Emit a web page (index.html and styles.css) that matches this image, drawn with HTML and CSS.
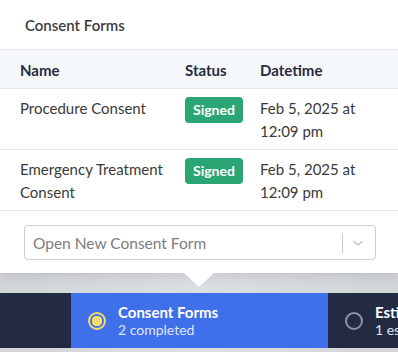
FILE: index.html
```html
<!DOCTYPE html>
<html lang="en">
<head>
    <meta charset="UTF-8">
    <meta name="viewport" content="width=device-width, initial-scale=1.0">
    <title>Consent Forms</title>
    <link rel="stylesheet" href="styles.css">
</head>
<body>
    <div class="popup">
        <div class="popup-title">Consent Forms</div>
        <table class="forms">
            <thead>
                <tr>
                    <th class="col-name">Name</th>
                    <th class="col-status">Status</th>
                    <th class="col-date">Datetime</th>
                </tr>
            </thead>
            <tbody>
                <tr>
                    <td>Procedure Consent</td>
                    <td><span class="badge">Signed</span></td>
                    <td>Feb 5, 2025 at 12:09 pm</td>
                </tr>
                <tr>
                    <td>Emergency Treatment Consent</td>
                    <td><span class="badge">Signed</span></td>
                    <td>Feb 5, 2025 at 12:09 pm</td>
                </tr>
            </tbody>
        </table>
        <div class="popup-footer">
            <div class="select">
                <span class="select-placeholder">Open New Consent Form</span>
                <span class="select-divider"></span>
                <svg class="select-chevron" width="14" height="14" viewBox="0 0 14 14">
                    <path d="M3 5.5 L7 9 L11 5.5" fill="none" stroke="#c4c4c4" stroke-width="1.6" stroke-linecap="round" stroke-linejoin="round"/>
                </svg>
            </div>
        </div>
    </div>
    <div class="arrow-row">
        <div class="arrow"></div>
    </div>

    <div class="steps">
        <div class="step step-prev"></div>
        <div class="step step-active">
            <span class="dot dot-active"></span>
            <div class="step-text">
                <div class="step-title">Consent Forms</div>
                <div class="step-sub">2 completed</div>
            </div>
        </div>
        <div class="step">
            <span class="dot"></span>
            <div class="step-text">
                <div class="step-title">Estimates</div>
                <div class="step-sub">1 estimate</div>
            </div>
        </div>
    </div>
</body>
</html>
```

FILE: styles.css
```css
:root {
    --text: #3a3a3a;
    --head-text: #262b40;
    --line: #e3e7ec;
    --green: #2aa674;
    --navy: #222b42;
    --blue: #3f6fe9;
}

* {
    box-sizing: border-box;
}

body {
    margin: 0;
    font-family: Lato, "Open Sans", sans-serif;
    color: var(--text);
    background: linear-gradient(90deg, #d2d5d8, #dcdfe1 50%, #d2d5d8);
    overflow: hidden;
}

.popup {
    background: #fff;
    height: 273px;
    box-shadow: 0 2px 12px rgba(0, 0, 0, 0.12);
}

.popup-title {
    height: 49px;
    padding: 16px 25px 0;
    font-size: 15px;
    font-weight: 600;
    color: #3c3c3c;
}

.forms {
    width: 100%;
    border-collapse: collapse;
    table-layout: fixed;
    font-size: 15px;
}

.forms th {
    height: 39px;
    text-align: left;
    font-weight: 700;
    color: var(--head-text);
    background: #f5f8fb;
    border-top: 1px solid var(--line);
    border-bottom: 1px solid var(--line);
    padding: 2px 0 0;
}

.forms td {
    vertical-align: top;
    line-height: 23px;
    padding: 8px 0 6px;
    border-bottom: 1px solid var(--line);
}

.col-name {
    width: 185px;
}

.forms th.col-name,
.forms td:first-child {
    padding-left: 20px;
}

.col-status {
    width: 75px;
}

.forms td:last-child {
    padding-right: 40px;
}

.badge {
    display: inline-block;
    background: var(--green);
    color: #fff;
    font-weight: 700;
    font-size: 14px;
    line-height: 26px;
    padding: 0 8px;
    border-radius: 4px;
}

.popup-footer {
    padding: 14px 22px 0 24px;
}

.select {
    display: flex;
    align-items: center;
    height: 35px;
    border: 1px solid #cccccc;
    border-radius: 4px;
    padding-left: 8px;
}

.select-placeholder {
    flex: 1;
    font-size: 15.5px;
    color: #7d7d7d;
}

.select-divider {
    width: 1px;
    height: 20px;
    background: #cccccc;
}

.select-chevron {
    margin: 0 10px 0 8px;
}

.arrow-row {
    height: 20px;
    display: flex;
    justify-content: center;
}

.arrow {
    width: 0;
    height: 0;
    border-left: 15px solid transparent;
    border-right: 15px solid transparent;
    border-top: 14px solid #fff;
}

.steps {
    display: flex;
    height: 55px;
    background: var(--navy);
}

.step {
    flex: none;
    display: flex;
    align-items: center;
    gap: 12px;
    padding-left: 17px;
    color: #fff;
    white-space: nowrap;
}

.step-prev {
    width: 71px;
    padding: 0;
}

.step-active {
    width: 257px;
    background: var(--blue);
}

.dot {
    width: 18px;
    height: 18px;
    border-radius: 50%;
    border: 2px solid #8c93a3;
    flex-shrink: 0;
}

.dot-active {
    border-color: #f4dc6a;
    background: radial-gradient(circle, #f4dc6a 0 5px, transparent 5.5px);
}

.step-title {
    font-size: 15px;
    font-weight: 700;
    line-height: 18px;
}

.step-sub {
    font-size: 14px;
    line-height: 17px;
    color: #dfe6fb;
}
```
